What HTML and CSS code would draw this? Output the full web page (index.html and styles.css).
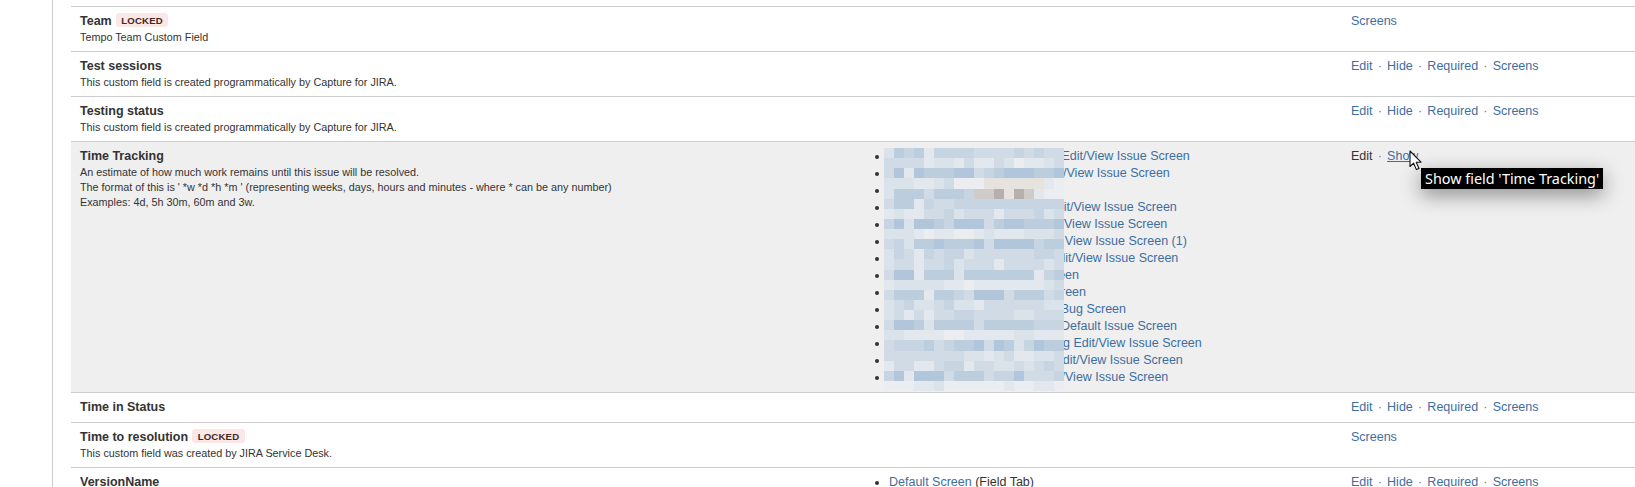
FILE: index.html
```html
<!DOCTYPE html>
<html lang="en">
<head>
<meta charset="utf-8">
<title>Custom fields</title>
<link rel="stylesheet" href="styles.css">
</head>
<body>
<main class="page">
<table class="fields">
<colgroup><col class="col-name"><col class="col-screens"><col class="col-ops"></colgroup>
<tbody>
<tr>
  <td><span class="field-name">Team</span><span class="lozenge">Locked</span><div class="field-desc">Tempo Team Custom Field</div></td>
  <td></td>
  <td><div class="ops"><a href="#">Screens</a></div></td>
</tr>
<tr>
  <td><span class="field-name">Test sessions</span><div class="field-desc">This custom field is created programmatically by Capture for JIRA.</div></td>
  <td></td>
  <td><div class="ops"><a href="#">Edit</a><span class="sep">·</span><a href="#">Hide</a><span class="sep">·</span><a href="#">Required</a><span class="sep">·</span><a href="#">Screens</a></div></td>
</tr>
<tr>
  <td><span class="field-name">Testing status</span><div class="field-desc">This custom field is created programmatically by Capture for JIRA.</div></td>
  <td></td>
  <td><div class="ops"><a href="#">Edit</a><span class="sep">·</span><a href="#">Hide</a><span class="sep">·</span><a href="#">Required</a><span class="sep">·</span><a href="#">Screens</a></div></td>
</tr>
<tr class="is-active">
  <td><span class="field-name">Time Tracking</span><div class="field-desc">An estimate of how much work remains until this issue will be resolved.<br>The format of this is ' *w *d *h *m ' (representing weeks, days, hours and minutes - where * can be any number)<br>Examples: 4d, 5h 30m, 60m and 3w.</div></td>
  <td>
    <ul class="screens">
      <li><span class="redacted" style="width:172.5px"></span><a href="#">Edit/View Issue Screen</a></li>
      <li><span class="redacted" style="width:152.5px"></span><a href="#">Edit/View Issue Screen</a></li>
      <li><span class="redacted" style="width:170px"></span></li>
      <li><span class="redacted" style="width:159.5px"></span><a href="#">Edit/View Issue Screen</a></li>
      <li><span class="redacted" style="width:150px"></span><a href="#">Edit/View Issue Screen</a></li>
      <li><span class="redacted" style="width:175.8px"></span><a href="#">View Issue Screen (1)</a></li>
      <li><span class="redacted" style="width:161px"></span><a href="#">Edit/View Issue Screen</a></li>
      <li><span class="redacted" style="width:150.4px"></span><a href="#">Screen</a></li>
      <li><span class="redacted" style="width:157.4px"></span><a href="#">Screen</a></li>
      <li><span class="redacted" style="width:171.7px"></span><a href="#">Bug Screen</a></li>
      <li><span class="redacted" style="width:172px"></span><a href="#">Default Issue Screen</a></li>
      <li><span class="redacted" style="width:174px"></span><a href="#">g Edit/View Issue Screen</a></li>
      <li><span class="redacted" style="width:165.5px"></span><a href="#">Edit/View Issue Screen</a></li>
      <li><span class="redacted" style="width:151px"></span><a href="#">Edit/View Issue Screen</a></li>
    </ul>
    <svg id="mosaic" class="mosaic" viewBox="0 0 18 24" preserveAspectRatio="none" shape-rendering="crispEdges" aria-hidden="true"></svg>
  </td>
  <td><div class="ops"><span class="plain">Edit</span><span class="sep">·</span><a class="hovered" href="#">Show</a></div></td>
</tr>
<tr>
  <td><span class="field-name">Time in Status</span></td>
  <td></td>
  <td><div class="ops"><a href="#">Edit</a><span class="sep">·</span><a href="#">Hide</a><span class="sep">·</span><a href="#">Required</a><span class="sep">·</span><a href="#">Screens</a></div></td>
</tr>
<tr>
  <td><span class="field-name">Time to resolution</span><span class="lozenge">Locked</span><div class="field-desc">This custom field was created by JIRA Service Desk.</div></td>
  <td></td>
  <td><div class="ops"><a href="#">Screens</a></div></td>
</tr>
<tr>
  <td><span class="field-name">VersionName</span></td>
  <td><ul class="screens"><li><a href="#">Default Screen</a> (Field Tab)</li></ul></td>
  <td><div class="ops"><a href="#">Edit</a><span class="sep">·</span><a href="#">Hide</a><span class="sep">·</span><a href="#">Required</a><span class="sep">·</span><a href="#">Screens</a></div></td>
</tr>
</tbody>
</table>
</main>
<div class="tooltip">Show field 'Time Tracking'</div>
<svg class="cursor" width="14" height="22" viewBox="0 0 14 22" aria-hidden="true"><path d="M1 1 V16.5 L4.6 13.2 L7.4 19.6 L10 18.5 L7.2 12.2 H12 Z" fill="#fff" stroke="#111" stroke-width="1.1" stroke-linejoin="round"/></svg>
<script src="mosaic.js"></script>
</body>
</html>
```
FILE: styles.css
```css
html, body {
  margin: 0;
  height: 487px;
  overflow: hidden;
  background: #fff;
}
body {
  position: relative;
  font-family: "Liberation Sans", Arial, sans-serif;
  font-size: 12.5px;
  line-height: 17px;
  color: #333;
}
.page {
  margin-left: 52px;
  padding: 6px 0 0 18px;
  border-left: 1px solid #ccc;
  height: 100%;
  box-sizing: border-box;
}
.fields {
  width: 1564px;
  table-layout: fixed;
  border-collapse: separate;
  border-spacing: 0;
}
.col-name { width: 795px; }
.col-screens { width: 476px; }
.col-ops { width: 293px; }
.fields td {
  border-top: 1px solid #ccc;
  padding: 6px 9px 6px;
  vertical-align: top;
  position: relative;
}
.is-active td { background: #efefef; }
.field-name { font-weight: 700; }
.lozenge {
  display: inline-block;
  margin-left: 4px;
  padding: 0 5.5px;
  height: 14px;
  line-height: 15px;
  vertical-align: 1px;
  border-radius: 3px;
  background: #fbe7e6;
  color: #42261f;
  font-size: 9.6px;
  font-weight: 700;
  letter-spacing: .2px;
  text-transform: uppercase;
}
.field-desc {
  font-size: 10.8px;
  line-height: 15px;
}
a { color: #3d6e9f; text-decoration: none; }
.hovered { text-decoration: underline; }
.plain { color: #333; }
.ops { display: flex; gap: 5.2px; }
.sep { color: #777; }
.screens {
  margin: 0;
  padding: 0 0 0 14px;
  position: relative;
}
.redacted { display: inline-block; }
.mosaic {
  position: absolute;
  left: 18px;
  top: 5.7px;
  width: 180px;
  height: 243px;
  filter: blur(.6px);
}
.tooltip {
  position: absolute;
  left: 1421px;
  top: 168px;
  height: 21px;
  padding: 0 4px;
  background: #000;
  color: #fff;
  font-family: "Noto Sans", sans-serif;
  font-size: 14.4px;
  line-height: 21px;
  white-space: nowrap;
  box-shadow: 0 6px 20px rgba(0, 0, 0, .42);
}
.cursor {
  position: absolute;
  left: 1409px;
  top: 150px;
}
```
FILE: mosaic.js
```js
var palette = {
  0: "#ebedf0", 1: "#e3e8ee", 2: "#dae2ea", 3: "#d1dbe5", 4: "#c7d4e1", 5: "#bccddd", 6: "#b1c6da",
  t: "#e6e2de", u: "#cfcbc8", v: "#b5afad"
};
var rows = [
  "254514444333343433",
  "333312213113201123",
  "361655566345666556",
  "2221123000tttttt10",
  "255535554uuvtvu100",
  "355143344444444444",
  "121133423331333423",
  "462665466635665556",
  "222101100121112223",
  "342556555636666455",
  "243143442333333443",
  "233133423331333323",
  "366155525555555145",
  "122222110111111123",
  "355515543666355534",
  "234223422133333322",
  "231313344333322333",
  "366525555355555444",
  "221111001111122111",
  "344453455636524655",
  "333333332212311223",
  "133113441332232343",
  "461666355534463334",
  "000112000000100110"
];
var svg = document.getElementById("mosaic");
rows.forEach(function (row, y) {
  row.split("").forEach(function (c, x) {
    var r = document.createElementNS("http://www.w3.org/2000/svg", "rect");
    r.setAttribute("x", x);
    r.setAttribute("y", y);
    r.setAttribute("width", 1);
    r.setAttribute("height", 1);
    r.setAttribute("fill", palette[c]);
    svg.appendChild(r);
  });
});
```
